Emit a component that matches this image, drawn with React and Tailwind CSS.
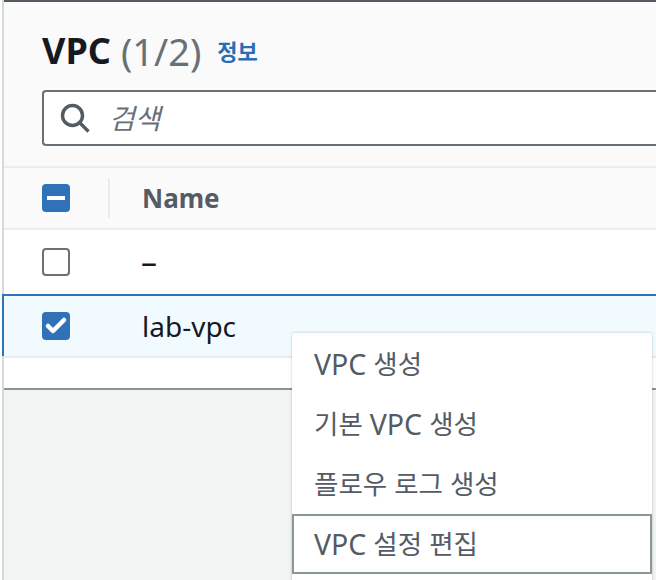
import React from 'react';
import { Check } from 'lucide-react';

const font = "font-['Noto_Sans','Noto_Sans_CJK_KR',sans-serif]";

function Vpc() {
  return <span className="text-[28.5px]">VPC</span>;
}

function MenuItem({ children, focused }) {
  return (
    <div
      className={`h-[60px] flex items-center gap-[7px] text-[26.5px] leading-none text-[#545b64] ${
        focused ? 'border-2 border-[#879596] pl-[20px]' : 'pl-[22px]'
      }`}
    >
      {children}
    </div>
  );
}

export default function App() {
  return (
    <div className={`${font} relative w-[656px] h-[580px] overflow-hidden bg-white`}>
      <div className="ml-[2px] h-full border-l-2 border-[#d5dbdb] flex flex-col">
        <div className="border-t-2 border-[#545b64] bg-[#fafafa] pt-[26px] pl-[38px] h-[168px] border-b-2 border-b-[#eaeded]">
          <div className="flex items-center h-[46px]">
            <span className="text-[36px] font-bold text-[#16191f] leading-none">VPC</span>
            <span className="ml-[10px] text-[38px] text-[#687078] leading-none">(1/2)</span>
            <span className="ml-[16px] text-[22px] font-bold text-[#2a6db5] leading-none">정보</span>
          </div>
          <div className="mt-[16px] h-[56px] bg-white border-2 border-r-0 border-[#687078] rounded-l-[4px] flex items-center pl-[16px]">
            <svg className="w-[30px] h-[30px] text-[#545b64]" viewBox="0 0 30 30" fill="none" stroke="currentColor" strokeWidth="3.4">
              <circle cx="12.5" cy="12.5" r="10" />
              <path d="M19.5 19.5L28.5 28.5" />
            </svg>
            <span className="ml-[19px] text-[28px] italic text-[#687078] leading-none">검색</span>
          </div>
        </div>
        <div className="h-[62px] bg-[#fafafa] border-b-2 border-[#eaeded] flex items-center pl-[38px]">
          <div className="w-[28px] h-[28px] rounded-[4px] bg-[#2f72b8] flex items-center justify-center">
            <div className="w-[18px] h-[4px] bg-white" />
          </div>
          <div className="ml-[38px] w-[2px] h-[40px] bg-[#eaeded]" />
          <span className="ml-[32px] text-[26px] font-bold text-[#545b64] leading-none">Name</span>
        </div>
        <div className="h-[64px] bg-white flex items-center pl-[38px]">
          <div className="w-[28px] h-[28px] rounded-[4px] border-2 border-[#687078] bg-white" />
          <span className="ml-[71px] text-[32px] text-[#16191f] leading-none">–</span>
        </div>
        <div className="-ml-[2px] h-[62px] bg-[#f1faff] border-t-2 border-l-2 border-[#2f72b8] flex items-center pl-[38px]">
          <div className="w-[28px] h-[28px] rounded-[4px] bg-[#2f72b8] flex items-center justify-center">
            <Check className="w-[24px] h-[24px] text-white" strokeWidth={4.5} />
          </div>
          <span className="ml-[72px] text-[28px] text-[#16191f] leading-none">lab-vpc</span>
        </div>
        <div className="h-[34px] bg-white border-t-2 border-[#eaeded] border-b-2 border-b-[#879596]" />
        <div className="flex-1 bg-[#f2f3f3]" />
      </div>
      <div className="absolute left-[292px] top-[333px] w-[360px] h-[260px] bg-white rounded-t-[3px] shadow-[0_0_3px_rgba(0,28,36,0.25)] pt-[1px]">
        <MenuItem><Vpc /><span>생성</span></MenuItem>
        <MenuItem><span>기본</span><Vpc /><span>생성</span></MenuItem>
        <MenuItem><span>플로우</span><span>로그</span><span>생성</span></MenuItem>
        <MenuItem focused><Vpc /><span>설정</span><span>편집</span></MenuItem>
      </div>
    </div>
  );
}
